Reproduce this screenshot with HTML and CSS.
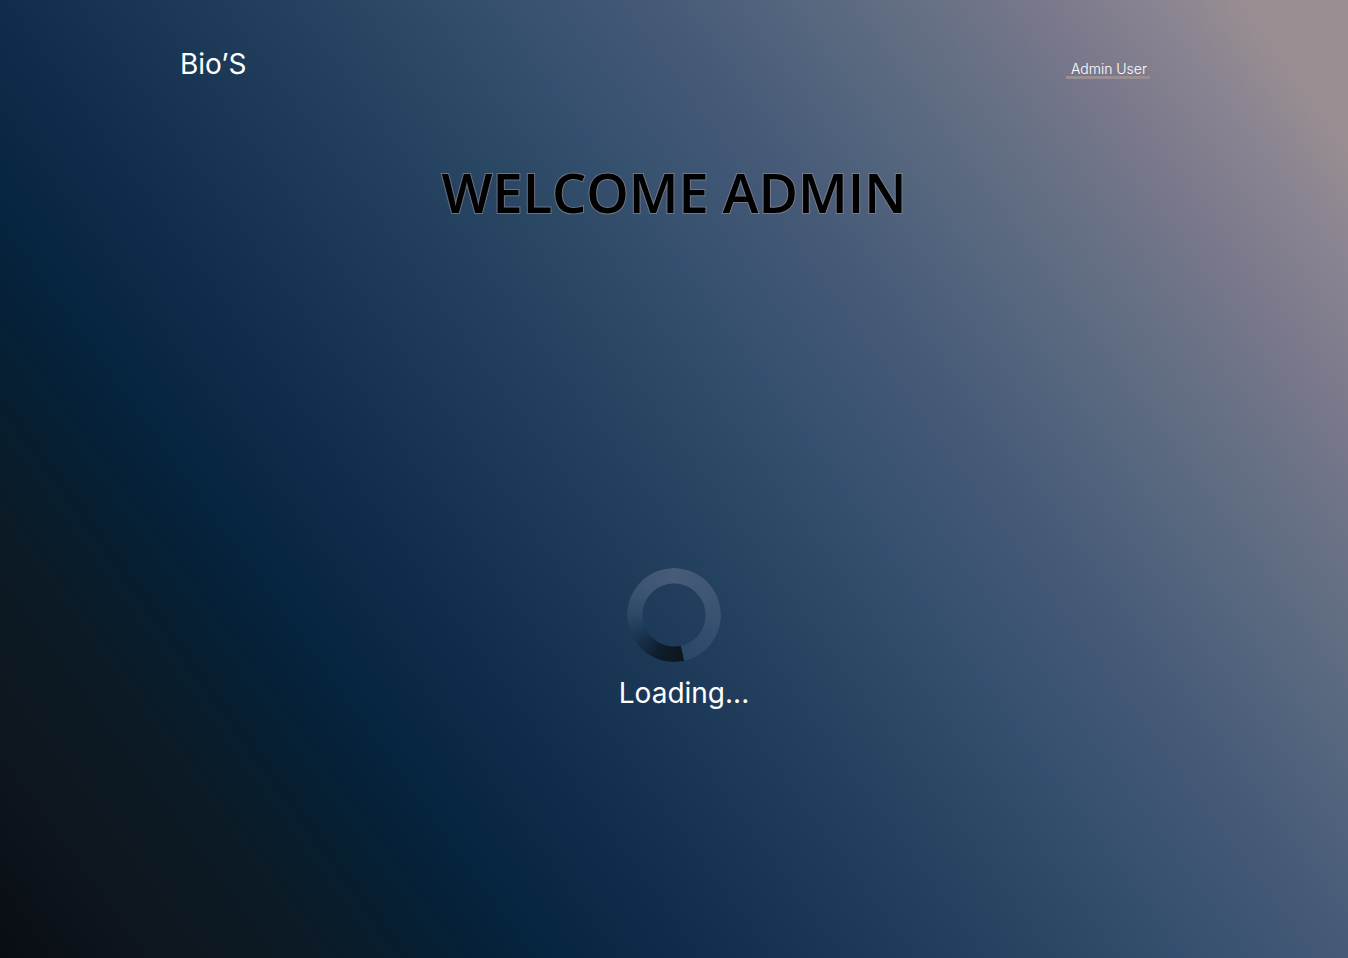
FILE: index.html
```
<!DOCTYPE html>
<html lang="en">
<head>
  <meta charset="UTF-8">
  <meta name="viewport" content="width=device-width, initial-scale=1.0">
  <title>Bio’S</title>
  <link rel="stylesheet" href="styles.css">
</head>
<body>
  <header class="header">
    <a class="logo" href="#">Bio’S</a>
    <nav>
      <a class="user-link" href="#">Admin User</a>
    </nav>
  </header>

  <main class="content">
    <h1 class="title">WELCOME ADMIN</h1>
    <div class="loader" role="status">
      <div class="spinner"></div>
      <p class="loader-text">Loading...</p>
    </div>
  </main>
</body>
</html>
```
FILE: styles.css
```
* {
  box-sizing: border-box;
  margin: 0;
  padding: 0;
}

body {
  min-height: 100vh;
  font-family: Inter, sans-serif;
  color: #fff;
  background: linear-gradient(
    54deg,
    #090d13 0%,
    #0e161e 8%,
    #0b1b27 16%,
    #052036 23%,
    #062540 27%,
    #0f2b4a 33%,
    #1b3857 42%,
    #223f5e 47%,
    #2b4865 53%,
    #35506e 58%,
    #3d5573 62%,
    #485b78 67%,
    #53657d 72%,
    #667085 79%,
    #7a788b 85%,
    #888391 90%,
    #998e92 95%
  );
}

.header {
  display: flex;
  justify-content: space-between;
  align-items: center;
  padding: 46px 198px 0 180px;
}

.logo {
  font-size: 28px;
  font-weight: 400;
  line-height: 36px;
  color: #fff;
  text-decoration: none;
}

.user-link {
  display: block;
  margin-top: 12px;
  padding: 0 3px 0 5px;
  border-bottom: 3px solid #998e92;
  font-size: 14px;
  font-weight: 300;
  line-height: 14px;
  color: #fff;
  text-decoration: none;
}

.content {
  display: flex;
  flex-direction: column;
  align-items: center;
}

.title {
  margin-top: 72px;
  font-family: "Open Sans", sans-serif;
  font-size: 54px;
  font-weight: 600;
  line-height: 76px;
  text-align: center;
  color: #000;
  -webkit-text-stroke: 2px rgba(153, 142, 146, 0.6);
  paint-order: stroke fill;
}

.loader {
  display: flex;
  flex-direction: column;
  align-items: center;
  gap: 13px;
  margin-top: 338px;
}

/* Ring cut out of a conic gradient */
.spinner {
  width: 94px;
  height: 94px;
  border-radius: 50%;
  background: conic-gradient(
    #485b78 0deg,
    #415775 50deg,
    #35506f 110deg,
    #2a4765 167deg,
    #0e161f 168deg,
    #0e1c2a 200deg,
    #1b3857 244deg,
    #2b4966 270deg,
    #3d5573 310deg,
    #485b78 360deg
  );
  mask: radial-gradient(circle, transparent 31px, #000 32px);
}

.loader-text {
  padding-left: 20px;
  font-size: 28px;
  font-weight: 400;
  line-height: 36px;
}
```
